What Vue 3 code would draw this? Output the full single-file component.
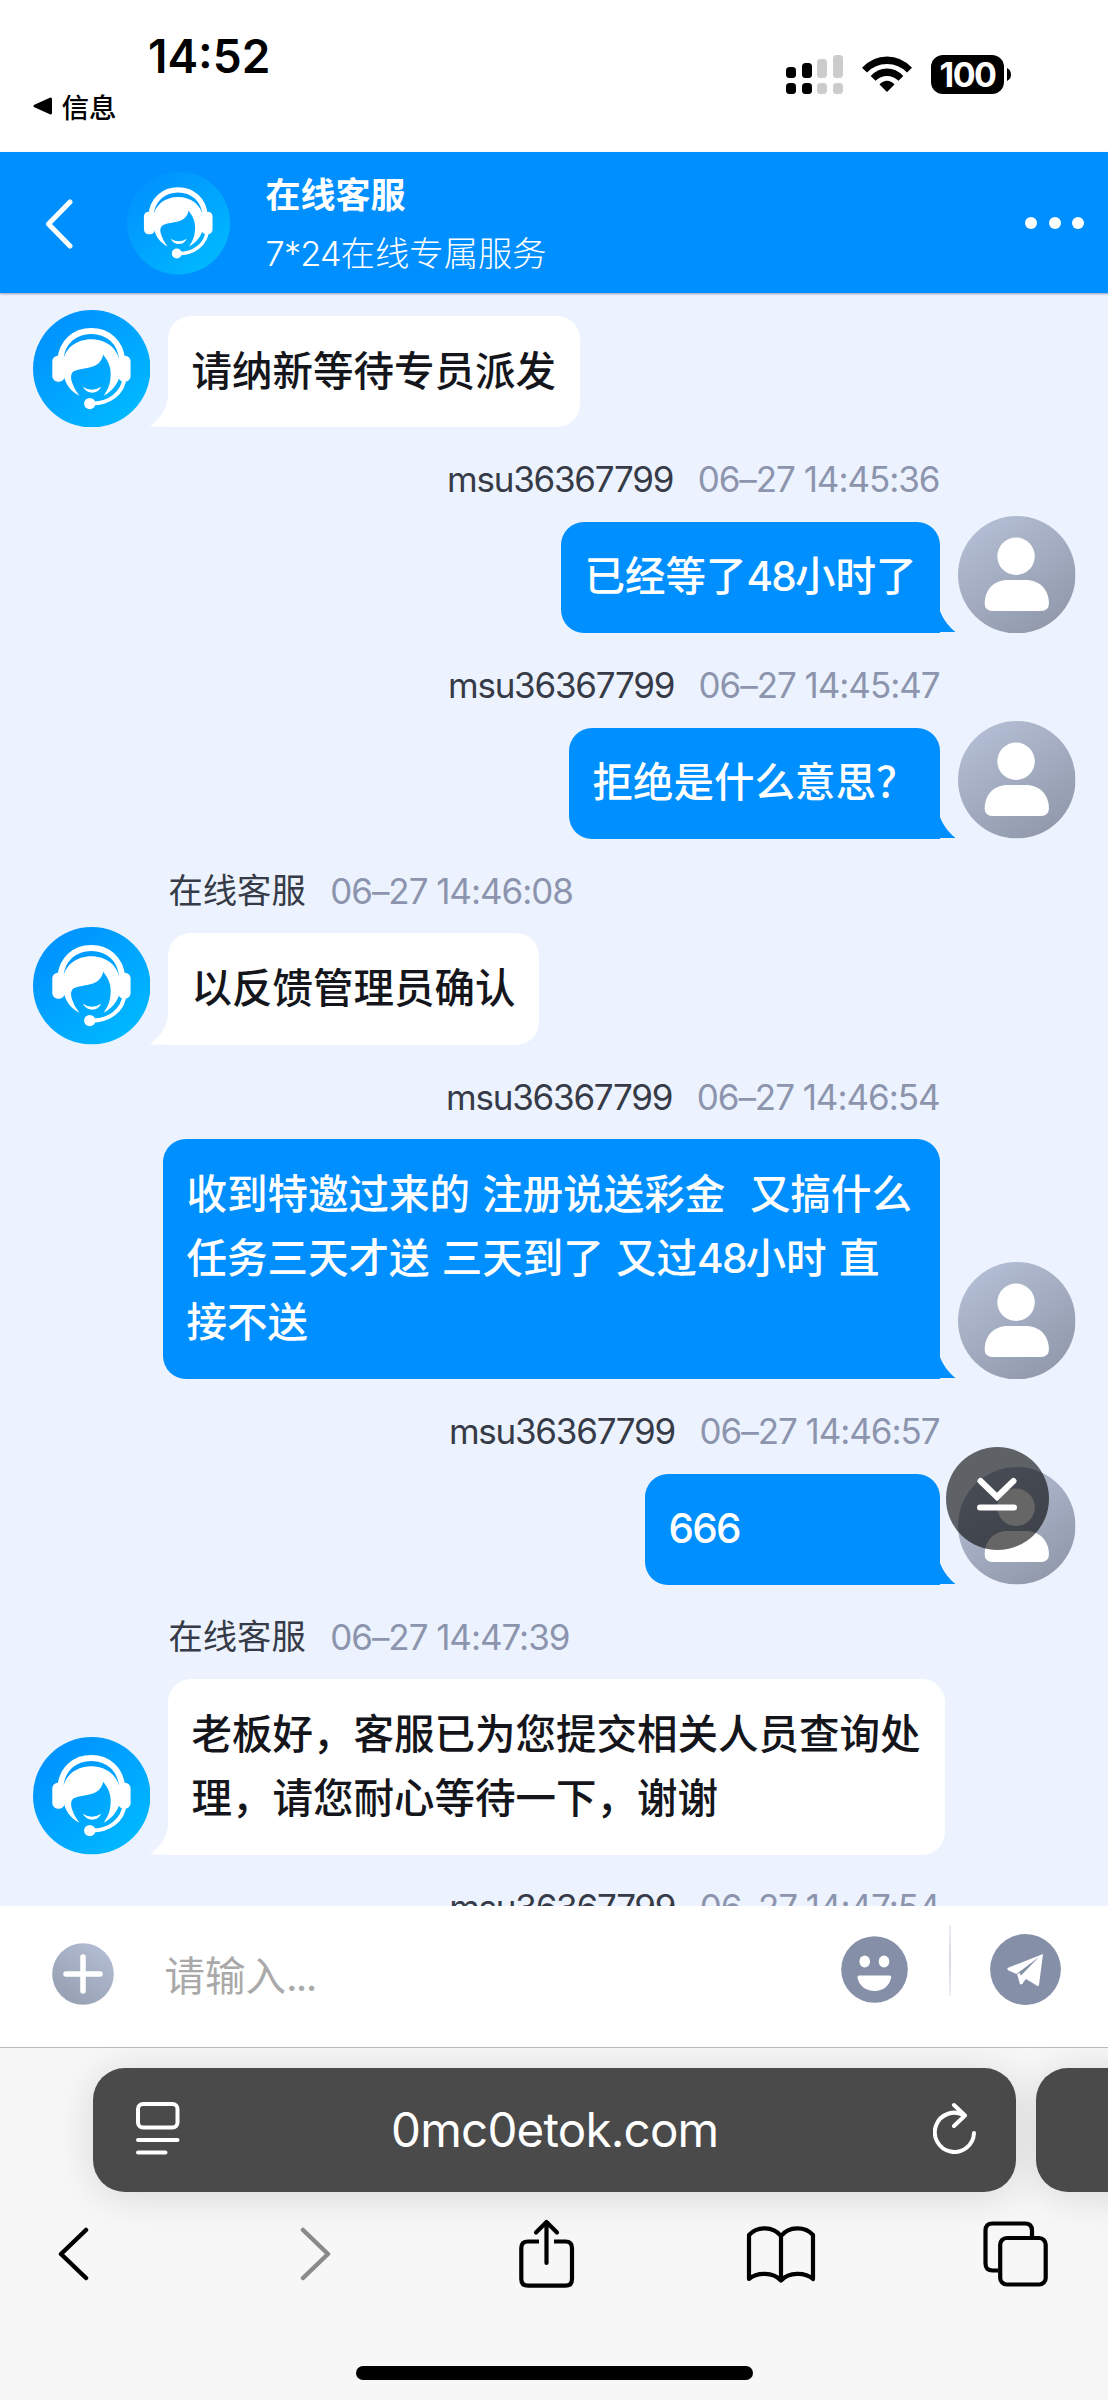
<script setup>
const messages = [
  { from: 'agent', text: '请纳新等待专员派发' },
  { from: 'user', name: 'msu36367799', time: '06–27 14:45:36', text: '已经等了48小时了' },
  { from: 'user', name: 'msu36367799', time: '06–27 14:45:47', text: '拒绝是什么意思？' },
  { from: 'agent', name: '在线客服', time: '06–27 14:46:08', text: '以反馈管理员确认' },
  {
    from: 'user', name: 'msu36367799', time: '06–27 14:46:54', wide: true,
    text: '收到特邀过来的 注册说送彩金  又搞什么\n任务三天才送 三天到了 又过48小时 直\n接不送',
  },
  { from: 'user', name: 'msu36367799', time: '06–27 14:46:57', text: '666' },
  {
    from: 'agent', name: '在线客服', time: '06–27 14:47:39', wide: true,
    text: '老板好，客服已为您提交相关人员查询处\n理，请您耐心等待一下，谢谢',
  },
  { from: 'user', name: 'msu36367799', time: '06–27 14:47:54', text: '' },
]
// Split into alternating text / digit runs so digits can be tracked tighter
const runs = (text) => text.split(/(\d+)/).filter(Boolean)
const signal = [11, 15, 19, 23]
</script>

<template>
  <div class="phone">
    <svg class="defs" width="0" height="0">
      <defs>
        <linearGradient id="agentBg" x1="0.1" y1="0.1" x2="0.8" y2="0.9">
          <stop offset="0" stop-color="#0091ff" /><stop offset="1" stop-color="#00b7ff" />
        </linearGradient>
        <linearGradient id="userBg" x1="0.25" y1="0.1" x2="0.8" y2="0.95">
          <stop offset="0" stop-color="#b1bbd1" /><stop offset="1" stop-color="#9199ab" />
        </linearGradient>
        <linearGradient id="plusBg" x1="0.8" y1="0.1" x2="0.2" y2="0.9">
          <stop offset="0" stop-color="#b1bbd1" /><stop offset="1" stop-color="#98a1b3" />
        </linearGradient>
        <symbol id="agent" viewBox="0 0 118 118">
          <circle cx="59" cy="59" r="59" fill="url(#agentBg)" />
          <path d="M27.500 50C29 32 42 21 58.500 21S88 32 89.500 50" fill="none" stroke="#fff" stroke-width="6" />
          <rect x="19.400" y="46" width="12.500" height="26" rx="5.500" fill="#fff" />
          <rect x="85.500" y="46" width="12.500" height="26" rx="5.500" fill="#fff" />
          <path d="M30 66V52C32 38 44 29.300 58.500 29.300S85 38 87 52V66C85.500 74 79 82 71 86C76 79 78 73 78 64C78 56 74.500 50 70.500 45C69.500 50 66.500 54.500 61 56.500C54 59 46 59 41 61.500C37 64 38 70 40 74.500C41.500 79 44 82.500 46.600 86C38 82 32.500 74 31 66Z" fill="#fff" />
          <path d="M50 77Q59 83 68.500 77Q65.500 83 59.500 83Q53.500 83 50 77Z" fill="#fff" />
          <path d="M92 67C91 84 76 94 59 94" fill="none" stroke="#fff" stroke-width="4" />
          <circle cx="57" cy="94" r="5.700" fill="#fff" />
        </symbol>
        <symbol id="user" viewBox="0 0 118 118">
          <circle cx="59" cy="59" r="59" fill="url(#userBg)" />
          <circle cx="58.300" cy="40.500" r="18.800" fill="#fff" />
          <path d="M26.800 88C26.800 74 36 64.300 50 64.300H68C82 64.300 91.300 74 91.300 88Q91.300 95.500 82 95.500H36Q26.800 95.500 26.800 88Z" fill="#fff" />
        </symbol>
      </defs>
    </svg>

    <header class="status">
      <div class="status-left">
        <div class="clock">14:52</div>
        <div class="return">
          <svg width="20" height="18" viewBox="0 0 20 18"><path d="M2 9L17.500 2V16Z" stroke="#000" stroke-width="3" stroke-linejoin="round" /></svg>
          <span>信息</span>
        </div>
      </div>
      <div class="status-right">
        <div class="signal">
          <div v-for="(h, i) in signal" :key="h" class="col" :class="{ off: i > 1 }">
            <i :style="{ height: h + 'px' }"></i><i class="dot"></i>
          </div>
        </div>
        <svg class="wifi" width="50" height="37" viewBox="0 0 50 37">
          <path d="M0 11.800Q10.500 0.500 25 0.500T50 11.800L45 16.500Q37 7.900 25 7.900T5 16.500Z" />
          <path d="M8.700 20Q16 12.600 25 12.600T41.300 20L36.500 24.800Q31.500 19.900 25 19.900T13.500 24.800Z" />
          <path d="M17.500 28.500Q21 24.800 25 24.800T32.500 28.500L25 36Z" />
        </svg>
        <div class="battery">100</div>
        <svg width="4" height="13" viewBox="0 0 4 13"><path d="M0 0Q4 2 4 6.500T0 13Z" /></svg>
      </div>
    </header>

    <nav class="topbar">
      <svg class="back" width="28" height="50" viewBox="0 0 28 50"><path d="M25 3L3.500 25L25 47" fill="none" stroke="#fff" stroke-width="5" stroke-linecap="round" stroke-linejoin="round" /></svg>
      <svg class="top-avatar"><use href="#agent" /></svg>
      <div class="titles">
        <div class="title">在线客服</div>
        <div class="subtitle"><span>7*24</span>在线专属服务</div>
      </div>
      <div class="more"><i></i><i></i><i></i></div>
    </nav>

    <main class="chat">
      <section v-for="(m, i) in messages" :key="i" class="msg" :class="[m.from, { first: !m.name }]">
        <div v-if="m.name" class="meta"><span class="name" :class="{ cjk: m.from === 'agent' }">{{ m.name }}</span><span class="time">{{ m.time }}</span></div>
        <div v-if="m.text" class="row">
          <svg class="avatar"><use :href="m.from === 'agent' ? '#agent' : '#user'" /></svg>
          <div class="bubble" :class="{ wide: m.wide }">
            <span v-for="(r, k) in runs(m.text)" :key="k" :class="{ digits: /^\d/.test(r) }">{{ r }}</span>
            <svg v-if="m.from === 'agent'" class="tail" width="19" height="34" viewBox="0 0 19 34"><path d="M19 0C17 15 12 24 0 33.500H19Z" /></svg>
            <svg v-else class="tail" width="16" height="22" viewBox="0 0 16 22"><path d="M0 0C3 8 8 15 15.500 21H0Z" /></svg>
          </div>
        </div>
      </section>
      <div class="to-bottom">
        <svg width="42" height="36" viewBox="0 0 42 36"><path d="M4.500 4L21 20L37.500 4M4 30.500H38" fill="none" stroke="#fff" stroke-width="6" stroke-linecap="round" /></svg>
      </div>
    </main>

    <div class="composer">
      <svg class="plus" width="62" height="62" viewBox="0 0 62 62"><circle cx="31" cy="31" r="30.800" fill="url(#plusBg)" /><path d="M31 14V48M14 31H48" stroke="#fff" stroke-width="5.500" stroke-linecap="round" /></svg>
      <div class="placeholder">请输入<span>...</span></div>
      <svg class="smile" width="67" height="67" viewBox="0 0 67 67">
        <circle cx="33.500" cy="33.500" r="33.300" fill="#858fa8" />
        <ellipse cx="23.700" cy="25.500" rx="5.300" ry="6" fill="#fff" /><ellipse cx="43" cy="25.500" rx="5.300" ry="6" fill="#fff" />
        <path d="M18 39.500H48.500Q50.500 39.500 50.200 41.500C48.500 50 42 55 33.500 55S18 50 16.500 41.500Q16.200 39.500 18 39.500Z" fill="#fff" />
      </svg>
      <div class="rule"></div>
      <svg class="send" width="71" height="71" viewBox="0 0 71 71">
        <circle cx="35.500" cy="35.500" r="35.400" fill="#858fa8" />
        <path d="M53 20L17.500 34Q17 35.500 18.500 36.500L26.500 40L49 23L30 42.500L31.500 50.500L36 45L47.500 52Q48.500 52.500 49 51Z" fill="#fff" />
        <path d="M28.500 39.500L31.500 50" stroke="#fff" stroke-width="3" />
      </svg>
    </div>

    <footer class="browser">
      <div class="tabs">
        <div class="address">
          <svg width="44" height="53" viewBox="0 0 44 53" fill="none" stroke="#fff" stroke-width="4" stroke-linecap="round"><rect x="2" y="2" width="39.500" height="23.500" rx="5" /><path d="M2 38H41.500M2 50.500H29.500" /></svg>
          <span class="url">0mc0etok.com</span>
          <svg width="44" height="54" viewBox="0 0 44 54" fill="none" stroke="#fff" stroke-width="4" stroke-linecap="round" stroke-linejoin="round"><path d="M41 31A19.600 19.600 0 1 1 31.500 13.500M21 3L32 13.500L21 24" /></svg>
        </div>
        <div class="next-tab"></div>
      </div>
      <div class="tools">
        <svg width="31" height="54" viewBox="0 0 31 54" fill="none" stroke="#000" stroke-width="4.500" stroke-linecap="round" stroke-linejoin="round"><path d="M28 3L3 27L28 51" /></svg>
        <svg class="forward" width="31" height="54" viewBox="0 0 31 54" fill="none" stroke="#8a8a8a" stroke-width="4.500" stroke-linecap="round" stroke-linejoin="round"><path d="M3 3L28 27L3 51" /></svg>
        <svg class="share" width="56" height="70" viewBox="0 0 56 70" fill="none" stroke="#000" stroke-width="4.200" stroke-linejoin="round"><path d="M20 22.500H9Q2.300 22.500 2.300 29V60Q2.300 66.700 9 66.700H46.500Q53 66.700 53 60V29Q53 22.500 46.500 22.500H35" /><path d="M27.500 44V3M17 13.500L27.500 3L38 13.500" stroke-linecap="round" /></svg>
        <svg class="book" width="70" height="58" viewBox="0 0 70 58" fill="none" stroke="#000" stroke-width="4.200" stroke-linecap="round" stroke-linejoin="round"><path d="M35 11C27 1 11 1 3 10V54C11 47 27 47 35 55.500C43 47 59 47 67 54V10C59 1 43 1 35 11V55" /></svg>
        <svg class="windows" width="66" height="66" viewBox="0 0 66 66" fill="none" stroke="#000" stroke-width="4.200"><path d="M15 49.500H9.500Q2.500 49.500 2.500 42.500V9.500Q2.500 2.500 9.500 2.500H42Q49 2.500 49 9.500V15" /><rect x="17.200" y="17" width="45.500" height="46.500" rx="6.500" /></svg>
      </div>
      <div class="home"></div>
    </footer>
  </div>
</template>

<style>
body { margin: 0; background: #f7f7f7; }
</style>

<style scoped>
.phone {
  width: 1108px; height: 2400px; overflow: hidden; display: flex; flex-direction: column;
  font-family: Inter, "Noto Sans CJK SC", sans-serif; background: #fff; color: #000;
}
svg { display: block; flex: none; }
.defs { position: absolute; }

.status { height: 152px; flex: none; display: flex; justify-content: space-between; box-sizing: border-box; padding: 27.500px 97px 0 32.500px; }
.clock { margin-left: 115.500px; font-size: 46px; font-weight: 600; line-height: 56px; }
.return { display: flex; align-items: center; gap: 9px; height: 36px; margin-top: 4px; font-size: 27.500px; font-weight: 500; }
.status-right { display: flex; align-items: center; height: 39px; margin-top: 27.500px; }
.signal { display: flex; align-items: flex-end; gap: 5.500px; height: 39px; }
.col { display: flex; flex-direction: column; gap: 5px; }
.col i { width: 10px; border-radius: 3.500px; background: #000; }
.col .dot { height: 11px; }
.col.off i { background: #ccc; }
.wifi { margin: 0 19.500px 0 19px; }
.battery { width: 73px; height: 39px; margin-right: 3px; border-radius: 12px; background: #000; color: #fff; font-size: 34px; font-weight: 700; line-height: 39px; text-align: center; letter-spacing: -1.500px; }

.topbar { height: 141px; flex: none; display: flex; align-items: center; box-sizing: border-box; padding: 0 24px 0 45px; background: #008fff; color: #fff; box-shadow: 0 1px 2px rgba(60, 70, 100, .5); z-index: 1; }
.back { margin-top: 3px; }
.top-avatar { width: 103px; height: 104px; margin-left: 53.500px; margin-top: 1px; }
.titles { flex: 1; margin: 6px 0 0 36px; }
.title { font-size: 35px; font-weight: 700; line-height: 56px; }
.subtitle { font-size: 34.300px; font-weight: 300; line-height: 61px; }
.subtitle span { letter-spacing: -0.800px; }
.more { display: flex; gap: 11.500px; }
.more i { width: 12px; height: 12px; border-radius: 50%; background: #fff; }

.chat { position: relative; height: 1612.500px; flex: none; overflow: hidden; background: #ecf3ff; }
.msg { padding: 31px 32.500px 0 32.500px; }
.msg.first { padding-top: 23px; }
.meta { display: flex; gap: 24.500px; height: 42px; margin-bottom: 21.500px; padding: 0 136px; font-size: 35px; line-height: 42px; font-weight: 400; white-space: nowrap; }
.user .meta { justify-content: flex-end; }
.name { color: #363b47; letter-spacing: -1.250px; }
.name.cjk { font-size: 34.300px; letter-spacing: 0; }
.time { color: #8c95ad; letter-spacing: -1.050px; font-weight: 400; }
.row { display: flex; align-items: flex-end; gap: 18px; }
.user .row { flex-direction: row-reverse; }
.avatar { width: 117.500px; height: 117.500px; margin-top: -8px; }
.bubble { position: relative; box-sizing: border-box; min-width: 295px; padding: 23.500px; border-radius: 23px; font-size: 40.500px; line-height: 64.300px; font-weight: 500; white-space: pre; word-spacing: 1.500px; }
.bubble.wide { width: 777px; }
.digits { letter-spacing: -1.800px; }
.agent .bubble { background: #fff; color: #14161c; border-bottom-left-radius: 0; }
.user .bubble { background: #008fff; color: #fff; border-bottom-right-radius: 0; }
.tail { position: absolute; bottom: 0; }
.agent .tail { right: 100%; margin-right: -1px; fill: #fff; }
.user .tail { left: 100%; margin-left: -0.500px; fill: #008fff; }
.to-bottom { position: absolute; left: 945.500px; top: 1154px; width: 103.500px; height: 103px; border-radius: 50%; background: rgba(0, 0, 0, .6); display: flex; align-items: center; justify-content: center; }
.to-bottom svg { margin-bottom: 8px; }

.composer { height: 141.500px; flex: none; box-sizing: border-box; display: flex; align-items: center; padding: 0 47.500px 6px 51.500px; background: #fff; }
.placeholder { flex: 1; margin-left: 51px; font-size: 40.500px; color: #a9a9a9; }
.placeholder span { letter-spacing: -1.800px; }
.plus { margin-top: 1px; }
.smile { margin-right: 41px; margin-bottom: 8px; }
.send { margin-bottom: 8px; }
.rule { width: 2px; height: 71px; margin: 0 38.500px 25px 0; background: linear-gradient(#eceef3, #d5d9e3, #eceef3); }

.browser { flex: 1; border-top: 1.500px solid #bcbcbe; background: #f7f7f7; }
.tabs { display: flex; gap: 20.500px; margin: 20px 0 0 93px; }
.address, .next-tab { height: 123.500px; border-radius: 32px; background: #4a4a4a; box-shadow: 0 4px 40px rgba(0, 0, 0, .13); }
.address { width: 922.500px; flex: none; box-sizing: border-box; display: flex; align-items: center; justify-content: space-between; padding: 0 38.500px 2px 42.500px; }
.url { color: #fff; font-size: 47.500px; line-height: 60px; letter-spacing: -0.800px; margin: 2px 3px 0 0; }
.next-tab { width: 300px; flex: none; }
.tools { display: flex; align-items: center; margin: 27px 0 0 57.500px; height: 70px; }
.forward { margin-left: 211px; }
.share { margin-left: 188.500px; }
.book { margin-left: 171px; }
.windows { margin-left: 166.500px; }
.home { width: 397px; height: 13.500px; margin: 77.500px auto 0; border-radius: 7px; background: #000; }
</style>
